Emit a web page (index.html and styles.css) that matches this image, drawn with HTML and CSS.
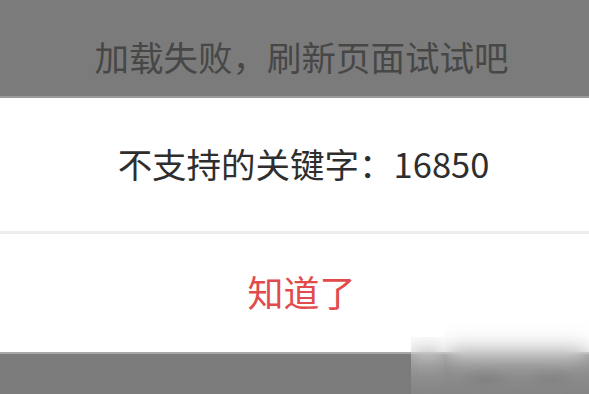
FILE: index.html
```html
<!DOCTYPE html>
<html lang="zh-CN">
<head>
    <meta charset="UTF-8">
    <meta name="viewport" content="width=device-width, initial-scale=1.0">
    <title>加载失败</title>
    <link rel="stylesheet" href="styles.css">
</head>
<body>
    <div id="screen">
        <div class="banner">加载失败，刷新页面试试吧</div>
        <div class="dialog">
            <div class="message">不支持的关键字：16850</div>
            <div class="divider"></div>
            <div class="action">知道了</div>
        </div>
        <div class="footer"></div>

        <div class="mark mark_small"></div>
        <div class="mark mark_big"></div>
    </div>
</body>
</html>
```

FILE: styles.css
```css
body{
    margin: 0;
    background-color: #7b7b7b;
    font-family: "Noto Sans CJK SC", "Noto Sans", sans-serif;
}

#screen{
    position: relative;
    width: 589px;
    height: 394px;
    overflow: hidden;
    display: flex;
    flex-direction: column;
}

.banner{
    height: 98px;
    display: flex;
    align-items: center;
    justify-content: center;
    padding-left: 14px;
    padding-top: 16px;
    box-sizing: border-box;
    font-size: 34.5px;
    color: #474747;
    border-bottom: 2px solid #9a9a9a;
}

.dialog{
    height: 254px;
    background-color: #fff;
    display: flex;
    flex-direction: column;
}

.message{
    height: 133px;
    display: flex;
    align-items: center;
    justify-content: center;
    padding-left: 18px;
    padding-bottom: 4px;
    box-sizing: border-box;
    font-size: 34.5px;
    color: #2e2e2e;
}

.divider{
    height: 3px;
    background-color: #ececec;
}

.action{
    flex: 1;
    display: flex;
    align-items: center;
    justify-content: center;
    padding-left: 14px;
    padding-bottom: 4px;
    box-sizing: border-box;
    font-size: 36px;
    color: #e14b4b;
}

.footer{
    flex: 1;
    border-top: 2px solid #a8a8a8;
}

/* blurred watermark patch */
.mark{
    position: absolute;
    backdrop-filter: blur(12px);
    -webkit-backdrop-filter: blur(12px);
    background: linear-gradient(rgba(255,255,255,0.3), rgba(255,255,255,0.08));
}

.mark_small{
    left: 411px;
    top: 337px;
    width: 33px;
    height: 57px;
}

.mark_big{
    left: 444px;
    top: 313px;
    width: 145px;
    height: 81px;
    background: radial-gradient(ellipse 28px 12px at 42px 66px, rgba(110,110,110,0.3), transparent),
                radial-gradient(ellipse 28px 12px at 108px 66px, rgba(110,110,110,0.25), transparent),
                linear-gradient(rgba(255,255,255,0.3), rgba(255,255,255,0.08));
}
```
